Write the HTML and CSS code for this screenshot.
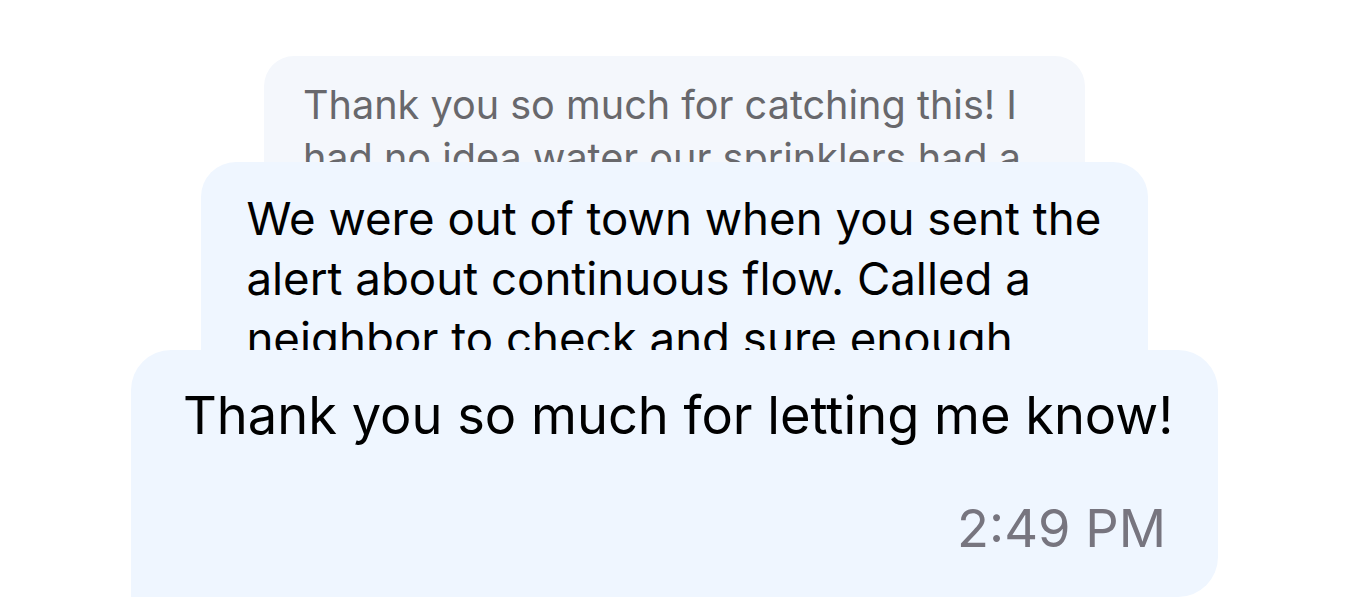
FILE: index.html
```html
<!DOCTYPE html>
<html lang="en">
<head>
<meta charset="utf-8">
<title>Messages</title>
<link rel="stylesheet" href="styles.css">
</head>
<body>
<main class="stack">
  <div class="card card-back">
    <p class="msg">Thank you so much for catching this! I had no idea water our sprinklers had a leak in the back yard.</p>
  </div>
  <div class="card card-mid">
    <p class="msg">We were out of town when you sent the alert about continuous flow. Called a neighbor to check and sure enough water was gushing from the sprinkler line.</p>
  </div>
  <div class="card card-front">
    <p class="msg">Thank you so much for letting me know!</p>
    <p class="time">2:49 PM</p>
  </div>
</main>
</body>
</html>
```

FILE: styles.css
```css
html, body {
  margin: 0;
  padding: 0;
  background: #ffffff;
  height: 600px;
  overflow: hidden;
}

.stack {
  display: flex;
  flex-direction: column;
  align-items: center;
  padding-top: 56px;
  font-family: "Inter", "Noto Sans", sans-serif;
}

.card {
  --s: 1;
  box-sizing: border-box;
  width: calc(1087px * var(--s));
  padding: calc(31px * var(--s)) calc(42px * var(--s)) calc(31px * var(--s)) calc(52px * var(--s));
  font-size: calc(52.4px * var(--s));
  line-height: 1.315;
  background: #eff6ff;
  color: #000000;
  border-radius: calc(40px * var(--s)) calc(40px * var(--s)) calc(40px * var(--s)) 0;
  overflow: hidden;
  flex-shrink: 0;
}

.msg,
.time {
  margin: 0;
}

.card-back {
  --s: 0.756;
  height: 150px;
  background: #f4f7fc;
  color: #68686c;
}

.card-mid {
  --s: 0.871;
  height: 240px;
  margin-top: -44px;
}

.card-front {
  --s: 1;
  margin-top: -52px;
  padding-bottom: 34px;
}

.time {
  margin-top: 44px;
  padding-right: 10px;
  text-align: right;
  color: #77757f;
}
```
